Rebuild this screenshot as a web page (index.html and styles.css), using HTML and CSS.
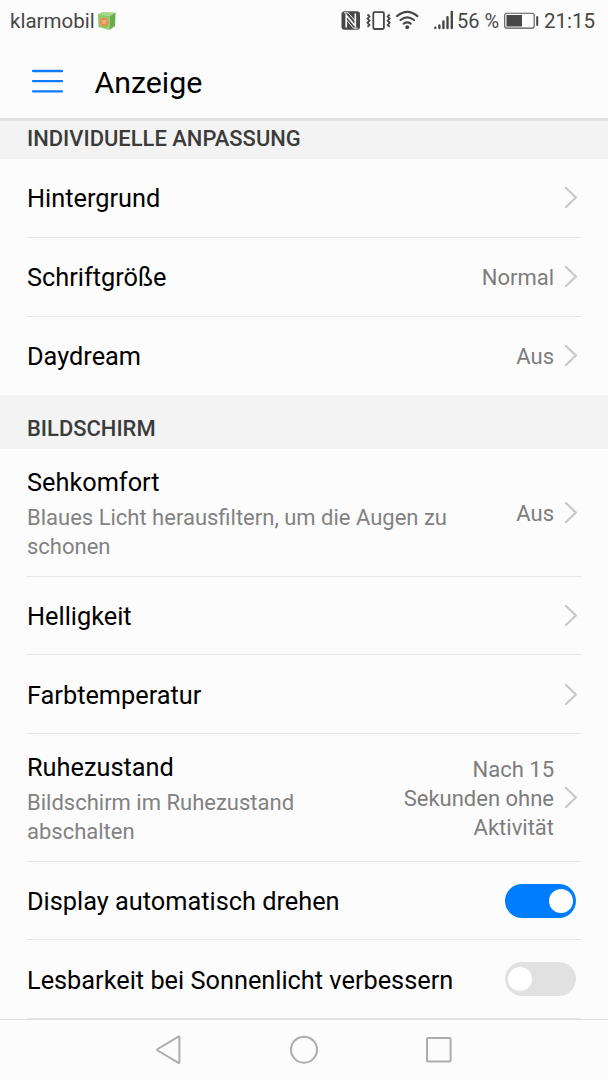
FILE: index.html
```
<!DOCTYPE html>
<html lang="de">
<head>
<meta charset="utf-8">
<title>Anzeige</title>
<link rel="stylesheet" href="styles.css">
</head>
<body>
<svg width="0" height="0" class="defs"><symbol id="chevron" viewBox="0 0 16 24"><path d="M3 3 12.9 12.5 3 22"/></symbol></svg>
<div class="screen">
  <div class="status">
    <span class="carrier">klarmobil</span>
    <svg class="parcel" width="20" height="20" viewBox="0 0 20 20"><path fill="#a3d886" d="M1 3 6 1 18.5 1.5 13 5z"/><path fill="#8acb68" d="M1 3 13 5 12.5 19 1.5 16z"/><path fill="#67ad49" d="M13 5 18.5 1.5 18 15 12.5 19z"/><circle cx="7" cy="11" r="4.4" fill="#f18b50"/><path d="M4.5 10.2h5M5.5 12.2h3" stroke="#fbd0b2"/></svg>
    <svg class="icons" width="120" height="24" viewBox="0 0 120 24">
      <rect x="1.5" y="2.2" width="18.5" height="18.6" rx="3" fill="#474747"/>
      <path d="M6.2 18.5V6.2L15.3 17V4.5" fill="none" stroke="#fcfcfc" stroke-width="1.6"/><path d="M3.8 3.8h4.4L15.3 12M6.2 10.5l7.2 8.7h4.3" fill="none" stroke="#fcfcfc" stroke-width="1"/>
      <g fill="none" stroke="#474747" stroke-width="1.8"><rect x="33.3" y="3.2" width="10.6" height="16.8" rx="1.2"/><path d="m27.5 5.5 2 2-2 2.1 2 2.1-2 2.1 2 2.1-2 2M49.7 5.5l-2 2 2 2.1-2 2.1 2 2.1-2 2.1 2 2"/></g>
      <g fill="none" stroke="#474747" stroke-width="2.2" stroke-linecap="round"><path d="M57 7.1q10.2-8.5 20.4 0M60.5 11q6.7-5.3 13.4 0M63.7 14.6q3.5-2.5 7 0"/></g><circle cx="67.2" cy="18.3" r="2" fill="#474747"/>
      <g stroke="#474747" stroke-width="2.4" stroke-linecap="round"><path d="M95.3 18.8v.1M99.4 16.5v2.6M103.4 12.4v6.7M107.5 8.2v10.9M111.8 3v16.1"/></g>
    </svg>
    <span class="percent">56 %</span>
    <svg class="battery" width="36" height="18" viewBox="0 0 36 18"><rect x=".7" y="1.2" width="29.5" height="14.9" rx="2" fill="none" stroke="#555" stroke-width="1.1"/><path fill="#474747" d="M2.5 3H18v11.4H2.5zM32.2 4.2h2v9.5h-2z"/></svg>
    <span class="clock">21:15</span>
  </div>
  <header class="appbar">
    <svg width="32" height="26" viewBox="0 0 32 26"><path d="M2 2h29M2 12.2h29M2 22.3h29" stroke="#0a7cff" stroke-width="2.3" stroke-linecap="round"/></svg>
    <h1>Anzeige</h1>
  </header>
  <main class="list">
    <h2 class="section first">INDIVIDUELLE ANPASSUNG</h2>
    <div class="row"><div class="label">Hintergrund</div><svg class="chev"><use href="#chevron"/></svg></div>
    <div class="row"><div class="label">Schriftgröße</div><div class="value">Normal</div><svg class="chev"><use href="#chevron"/></svg></div>
    <div class="row last"><div class="label">Daydream</div><div class="value">Aus</div><svg class="chev"><use href="#chevron"/></svg></div>
    <h2 class="section">BILDSCHIRM</h2>
    <div class="row tall"><div class="label">Sehkomfort<p>Blaues Licht herausfiltern, um die Augen zu<br>schonen</p></div><div class="value">Aus</div><svg class="chev"><use href="#chevron"/></svg></div>
    <div class="row"><div class="label">Helligkeit</div><svg class="chev"><use href="#chevron"/></svg></div>
    <div class="row"><div class="label">Farbtemperatur</div><svg class="chev"><use href="#chevron"/></svg></div>
    <div class="row tall"><div class="label">Ruhezustand<p>Bildschirm im Ruhezustand<br>abschalten</p></div><div class="value">Nach 15<br>Sekunden ohne<br>Aktivität</div><svg class="chev"><use href="#chevron"/></svg></div>
    <div class="row"><div class="label">Display automatisch drehen</div><div class="switch on"></div></div>
    <div class="row"><div class="label">Lesbarkeit bei Sonnenlicht verbessern</div><div class="switch"></div></div>
  </main>
  <nav class="navbar">
    <svg width="30" height="32" viewBox="0 0 30 32"><path d="M25.4 3.1v25.2q0 1-1 .5L3.7 16.5q-1.2-.8 0-1.5L24.4 2.7q1-.5 1 .4z"/></svg>
    <svg width="30" height="32" viewBox="0 0 30 32"><circle cx="15" cy="15.7" r="13"/></svg>
    <svg width="30" height="32" viewBox="0 0 30 32"><rect x="3" y="4" width="23.6" height="23.4" rx="1"/></svg>
  </nav>
</div>
</body>
</html>
```
FILE: styles.css
```
* { box-sizing: border-box; }
body { margin: 0; background: #fcfcfc; font-family: Roboto, "Liberation Sans", sans-serif; color: #000; }
.defs { position: absolute; }
.screen { width: 608px; height: 1080px; display: flex; flex-direction: column; overflow: hidden; background: #fcfcfc; }
.status { height: 42px; flex: none; display: flex; align-items: center; padding: 0 13px 0 10px; font-size: 20.5px; color: #474747; white-space: nowrap; }
.carrier { width: 87px; }
.parcel { flex: none; }
.icons { flex: none; margin-left: 223px; margin-top: -1px; }
.percent { margin-left: -3px; width: 47px; font-size: 20px; }
.battery { flex: none; margin-top: -1px; }
.clock { margin-left: auto; }
.appbar { height: 79px; flex: none; display: flex; align-items: center; padding: 3px 0 0 31px; border-bottom: 3px solid #e0e0e0; }
h1 { margin: 2px 0 0 31.5px; font-size: 30.3px; font-weight: 400; line-height: 36px; }
.list { height: 898px; flex: none; overflow: hidden; }
.section { margin: 0; height: 54px; padding: 20px 27px 0; background: #f3f3f3; color: #3b3b3b; font-size: 21.95px; line-height: 27px; font-weight: 500; white-space: nowrap; }
.section.first { height: 38px; padding-top: 4px; }
.row { height: 78.75px; margin: 0 27px; display: flex; align-items: center; border-bottom: 1.5px solid #e6e6e6; }
.row.last { border-color: transparent; height: 78.5px; }
.tall { height: 127.6px; }
.label { flex: 1; font-size: 25.32px; line-height: 30px; white-space: nowrap; padding-top: 3px; }
.tall .label { padding-top: 5px; }
.label p { margin: 5.6px 0 0; font-size: 22px; line-height: 28.7px; color: #828282; }
.value { font-size: 22px; line-height: 28.8px; color: #7d7d7d; text-align: right; white-space: nowrap; padding-top: 3.6px; }
.chev { width: 16px; height: 24px; margin: 0 2px 1px 9px; flex: none; fill: none; stroke: #c9c9c9; stroke-width: 2.3; stroke-linecap: round; stroke-linejoin: round; }
.switch { width: 71px; height: 34px; border-radius: 17px; background: #e1e1e1; margin-right: 5px; padding: 5px 3px; display: flex; }
.switch::before { content: ""; width: 24px; height: 24px; border-radius: 50%; background: #fff; }
.switch.on { background: #007dff; justify-content: flex-end; }
.navbar { height: 61px; flex: none; display: flex; justify-content: space-between; padding: 14px 154px 0 154px; border-top: 1px solid #dedede; }
.navbar svg { fill: none; stroke: #acacac; stroke-width: 2; }
```
